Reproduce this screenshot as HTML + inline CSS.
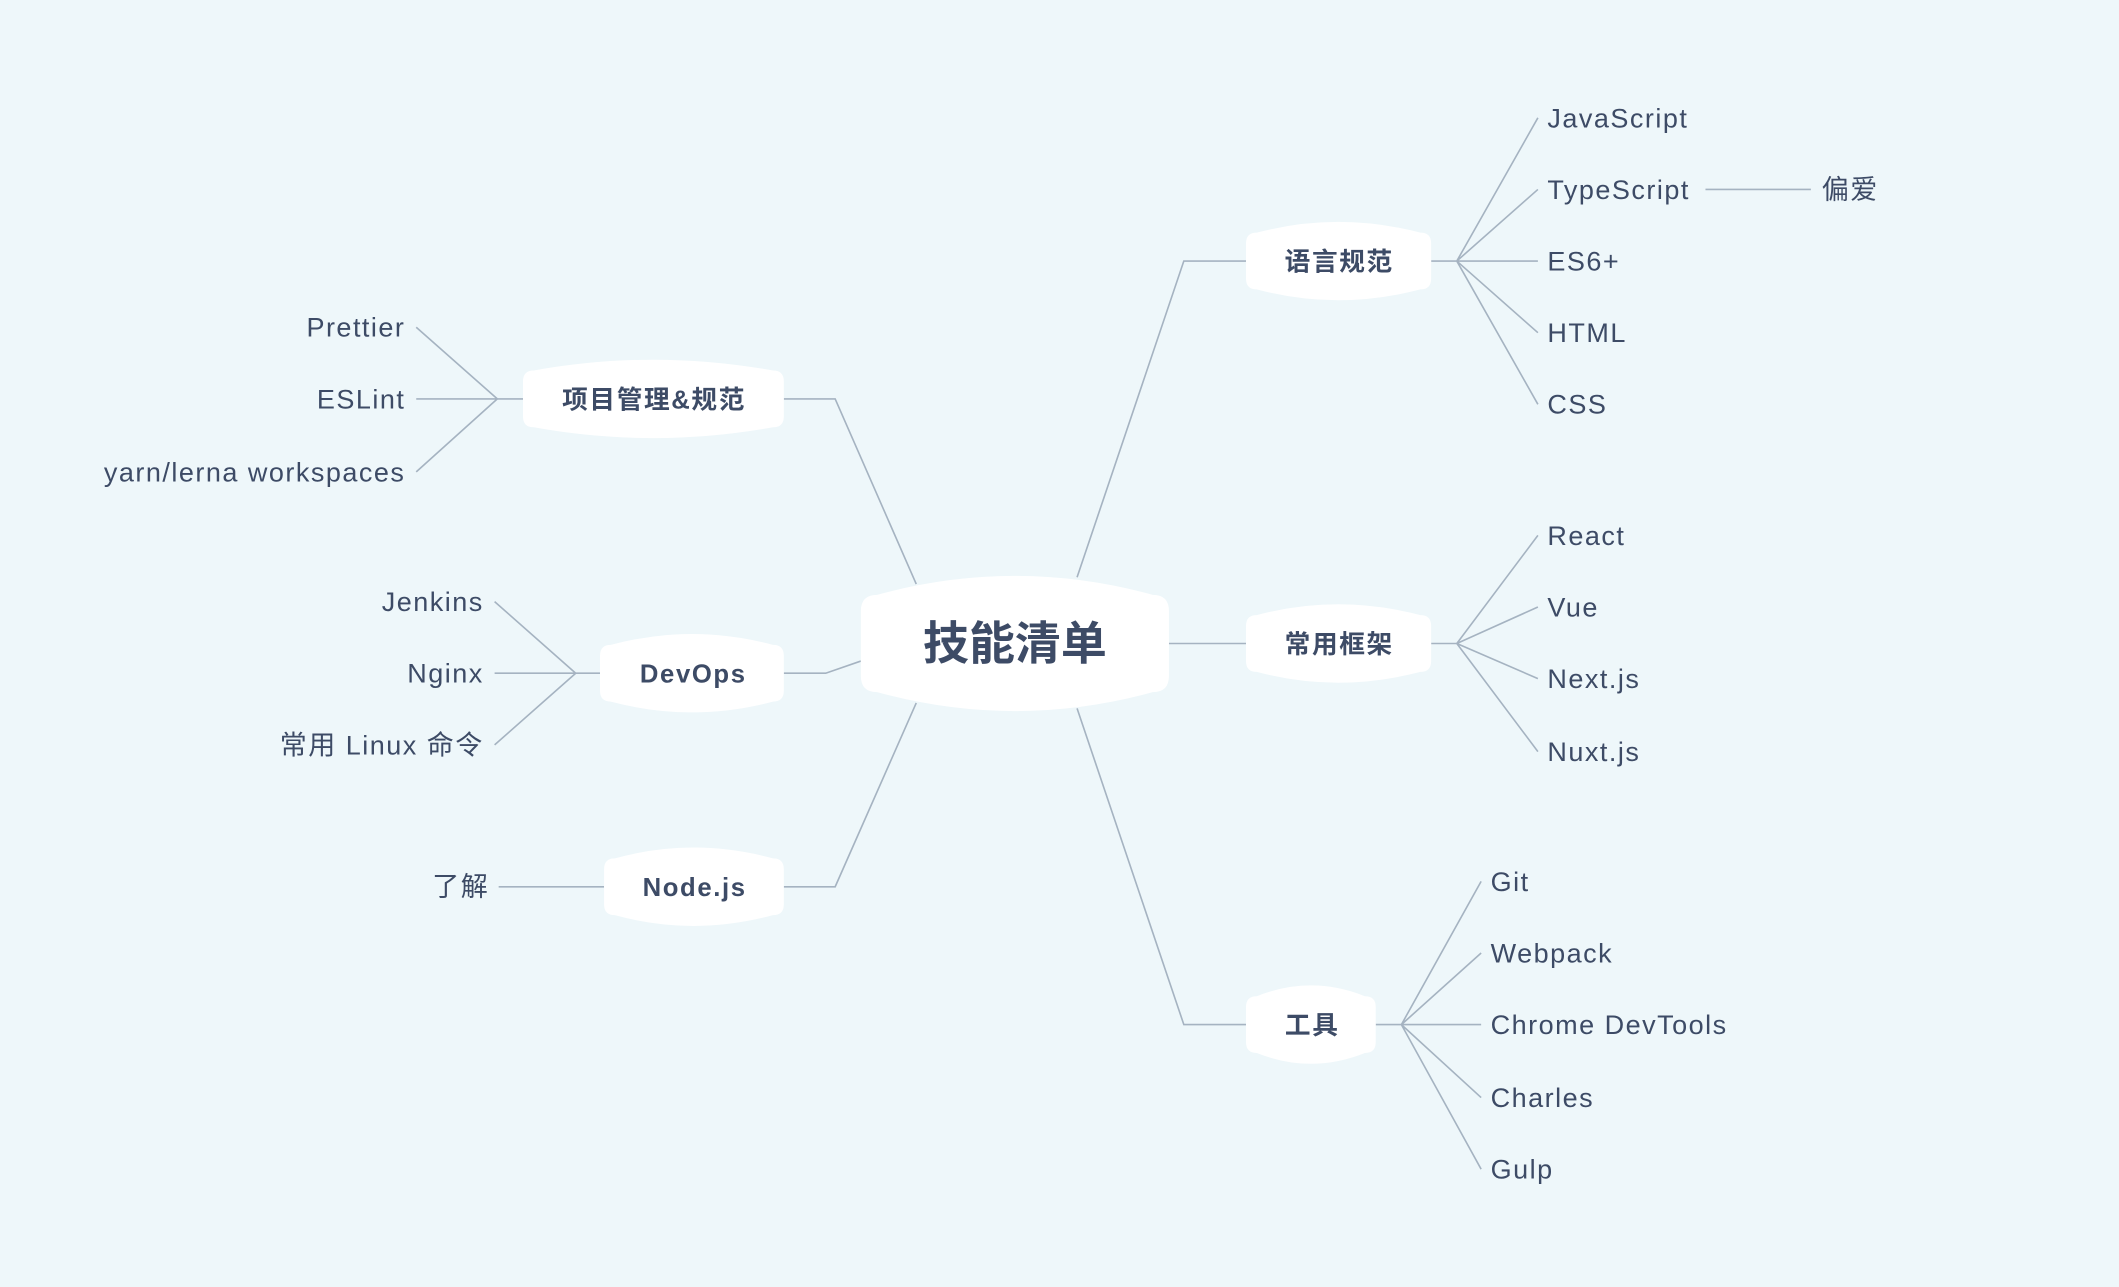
<!DOCTYPE html>
<html><head><meta charset="utf-8"><style>
html,body{margin:0;padding:0;background:#eef7fa;}
svg{display:block}
text{font-family:"Liberation Sans","Noto Sans CJK SC",sans-serif;fill:#3d4b66;}
.c{font-size:20px;letter-spacing:1.1px}
.b{font-size:19px;font-weight:bold;text-anchor:middle;letter-spacing:1.2px}
</style></head><body>
<svg width="2119" height="1287" viewBox="0 0 1568 952" xmlns="http://www.w3.org/2000/svg">
<rect width="1568" height="952" fill="#eef7fa"/>
<g stroke="#a5b3c1" stroke-width="1.2" fill="none">
<polyline points="797,427 876,193 922,193"/>
<polyline points="865,476 922,476"/>
<polyline points="797,524 876,758 922,758"/>
<polyline points="678,432 618,295 580,295"/>
<polyline points="637,489 611,498 580,498"/>
<polyline points="678,520 618,656 580,656"/>
<path d="M1059 193H1078M1078 193L1138 87M1078 193L1138 140M1078 193L1138 193M1078 193L1138 246M1078 193L1138 299M1262 140H1340"/>
<path d="M1059 476H1078M1078 476L1138 396M1078 476L1138 449M1078 476L1138 502M1078 476L1138 556"/>
<path d="M1018 758H1037M1037 758L1096 652M1037 758L1096 705M1037 758L1096 758M1037 758L1096 812M1037 758L1096 865"/>
<path d="M387 295H368M368 295L308 242M368 295L308 295M368 295L308 349"/>
<path d="M444 498H426M426 498L366 445M426 498L366 498M426 498L366 551"/>
<path d="M447 656H369"/>
</g>
<g fill="#fff">
<path d="M649,440 Q751,412 853,440 Q865,440 865,452 L865,500 Q865,512 853,512 Q751,540 649,512 Q637,512 637,500 L637,452 Q637,440 649,440Z"/>
<path d="M930,172 Q990,156 1051,172 Q1059,172 1059,180 L1059,206 Q1059,214 1051,214 Q990,230 930,214 Q922,214 922,206 L922,180 Q922,172 930,172Z"/>
<path d="M930,455 Q990,439 1051,455 Q1059,455 1059,463 L1059,489 Q1059,497 1051,497 Q990,513 930,497 Q922,497 922,489 L922,463 Q922,455 930,455Z"/>
<path d="M930,737 Q970,721 1010,737 Q1018,737 1018,745 L1018,771 Q1018,779 1010,779 Q970,795 930,779 Q922,779 922,771 L922,745 Q922,737 930,737Z"/>
<path d="M395,274 Q483,258 572,274 Q580,274 580,282 L580,308 Q580,316 572,316 Q483,332 395,316 Q387,316 387,308 L387,282 Q387,274 395,274Z"/>
<path d="M452,477 Q512,461 572,477 Q580,477 580,485 L580,511 Q580,519 572,519 Q512,535 452,519 Q444,519 444,511 L444,485 Q444,477 452,477Z"/>
<path d="M455,635 Q513,619 572,635 Q580,635 580,643 L580,669 Q580,677 572,677 Q513,693 455,677 Q447,677 447,669 L447,643 Q447,635 455,635Z"/>
</g>
<text x="751" y="488" style="font-size:34px;font-weight:bold;text-anchor:middle">技能清单</text>
<text class="b" x="991" y="200">语言规范</text>
<text class="b" x="991" y="483">常用框架</text>
<text class="b" x="971" y="765">工具</text>
<text class="b" x="484" y="302">项目管理&amp;规范</text>
<text class="b" x="513" y="505">DevOps</text>
<text class="b" x="514" y="663">Node.js</text>
<text class="c" x="1145" y="94">JavaScript</text>
<text class="c" x="1145" y="147">TypeScript</text>
<text class="c" x="1348" y="147">偏爱</text>
<text class="c" x="1145" y="200">ES6+</text>
<text class="c" x="1145" y="253">HTML</text>
<text class="c" x="1145" y="306">CSS</text>
<text class="c" x="1145" y="403">React</text>
<text class="c" x="1145" y="456">Vue</text>
<text class="c" x="1145" y="509">Next.js</text>
<text class="c" x="1145" y="563">Nuxt.js</text>
<text class="c" x="1103" y="659">Git</text>
<text class="c" x="1103" y="712">Webpack</text>
<text class="c" x="1103" y="765">Chrome DevTools</text>
<text class="c" x="1103" y="819">Charles</text>
<text class="c" x="1103" y="872">Gulp</text>
<text class="c" x="300" y="249" text-anchor="end">Prettier</text>
<text class="c" x="300" y="302" text-anchor="end">ESLint</text>
<text class="c" x="300" y="356" text-anchor="end">yarn/lerna workspaces</text>
<text class="c" x="358" y="452" text-anchor="end">Jenkins</text>
<text class="c" x="358" y="505" text-anchor="end">Nginx</text>
<text class="c" x="358" y="558" text-anchor="end">常用 Linux 命令</text>
<text class="c" x="362" y="663" text-anchor="end">了解</text>
</svg>
</body></html>
